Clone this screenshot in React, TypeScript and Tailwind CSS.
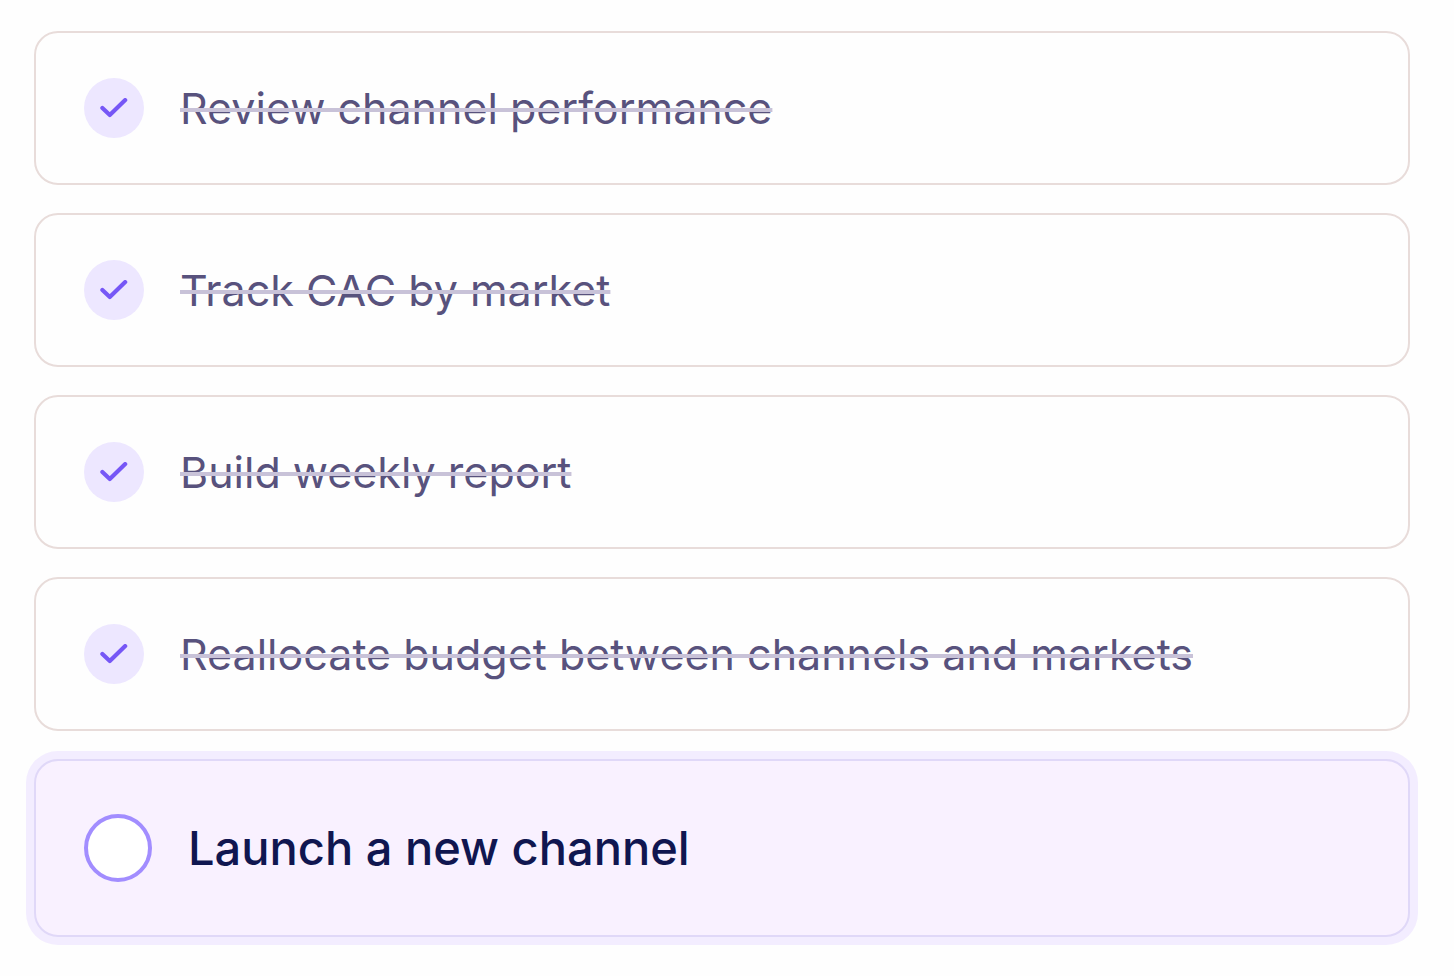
type Task = { id: string; title: string; done: boolean };

const tasks: Task[] = [
  { id: "review", title: "Review channel performance", done: true },
  { id: "track", title: "Track CAC by market", done: true },
  { id: "report", title: "Build weekly report", done: true },
  { id: "reallocate", title: "Reallocate budget between channels and markets", done: true },
  { id: "launch", title: "Launch a new channel", done: false },
];

function DoneTask({ task }: { task: Task }) {
  return (
    <li className="flex items-center gap-9 rounded-3xl border-2 border-[#e8dcda] bg-[#fefefe] px-12 py-11">
      <span className="grid size-15 shrink-0 place-items-center">
        <input
          id={task.id}
          type="checkbox"
          defaultChecked
          className="col-start-1 row-start-1 size-15 appearance-none rounded-full bg-[#ede7ff]"
        />
        <svg
          viewBox="0 0 28 20"
          className="pointer-events-none col-start-1 row-start-1 h-5 w-7"
          fill="none"
          stroke="#7657f6"
          strokeWidth="4.2"
          strokeLinecap="round"
          strokeLinejoin="round"
          aria-hidden="true"
        >
          <path d="M2.4 10L9.8 17L25.2 2.1" />
        </svg>
      </span>
      <label
        htmlFor={task.id}
        className="text-[43px] leading-[62px] font-normal text-[#58527d] line-through decoration-[#c8c2d8] decoration-4"
      >
        {task.title}
      </label>
    </li>
  );
}

function NextTask({ task }: { task: Task }) {
  return (
    <li className="flex items-center gap-9 rounded-3xl border-2 border-[#e0d8f8] bg-[#f9f1ff] px-12 py-13 ring-8 ring-[#f3edff]">
      <input
        id={task.id}
        type="checkbox"
        className="size-17 shrink-0 appearance-none rounded-full border-4 border-[#a28dff] bg-white"
      />
      <label htmlFor={task.id} className="text-[47px] leading-[70px] font-medium text-[#101650]">
        {task.title}
      </label>
    </li>
  );
}

export default function App() {
  return (
    <main className="min-h-screen bg-[#fefefe] pt-[31px] pr-11 pb-9 pl-[34px] font-['Inter',sans-serif]">
      <ul className="flex flex-col gap-7">
        {tasks.map((task) =>
          task.done ? <DoneTask key={task.id} task={task} /> : <NextTask key={task.id} task={task} />,
        )}
      </ul>
    </main>
  );
}
